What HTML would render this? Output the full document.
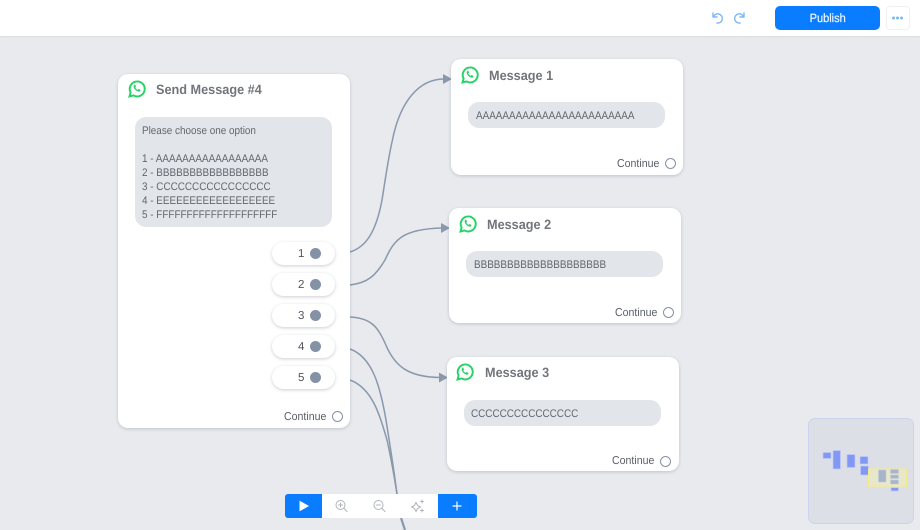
<!DOCTYPE html>
<html><head><meta charset="utf-8"><style>
html,body{margin:0;padding:0}
body{width:920px;height:530px;position:relative;overflow:hidden;background:#e8eaee;font-family:"Liberation Sans",sans-serif;color:#6b7280;text-rendering:geometricPrecision}
#w{position:absolute;left:0;top:0;width:920px;height:530px;overflow:hidden;filter:blur(.35px)}
.a{position:absolute}
.top{left:0;top:0;width:920px;height:36px;background:#fff;box-shadow:0 1px 2px rgba(0,0,0,.06)}
.pub{left:775px;top:6px;width:105px;height:24px;background:#0a7cff;border-radius:5px;color:#e8f3ff;line-height:24px;text-align:center}
.pub span{display:inline-block;font-size:12px;-webkit-text-stroke:.25px #e8f3ff;transform:scaleX(.92)}
.more{left:886px;top:6px;width:22px;height:22px;border:1px solid #eef0f3;border-radius:4px;background:#fff}
.card{background:#fff;border-radius:10px;box-shadow:0 1px 3px rgba(70,80,100,.25);width:232px}
.ttl{font-size:13.5px;font-weight:bold;color:#72757b;white-space:nowrap;transform:scaleX(.94);transform-origin:0 50%}
.bub{background:#e2e5ea;border-radius:11px;white-space:nowrap}
.t{position:absolute;font-size:11px;color:#62666e;transform:scaleX(.9);transform-origin:0 50%}
.cont{font-size:11.5px;color:#5a5f67;white-space:nowrap;transform:scaleX(.92);transform-origin:0 50%}
.ring{width:9px;height:9px;border:1.5px solid #8592a6;border-radius:50%;background:#fff}
.opt{left:272px;width:63px;height:23px;background:#fff;border-radius:12px;box-shadow:0 1px 3px rgba(70,80,100,.28)}
.opt span{position:absolute;left:26px;width:6px;top:4.500px;font-size:11.500px;line-height:15px;color:#50555d}
.opt i{position:absolute;left:38px;top:6px;width:11px;height:11px;border-radius:50%;background:#8492a6}
.tool{top:494px;height:24px}
.wa{width:18px;height:18px}
</style></head><body><div id="w">
<div class="a top"></div>
<svg class="a" style="left:710px;top:10px" width="40" height="16" fill="none" stroke="#7db7f5" stroke-width="1.4" stroke-linecap="round" stroke-linejoin="round"><path d="M3 3v4h4M3.400 7A4.600 4.600 0 1 1 7 13"/><path d="M34 3v4h-4M33.600 7A4.600 4.600 0 1 0 30 13"/></svg>
<div class="a pub"><span>Publish</span></div>
<div class="a more"></div>
<svg class="a" style="left:891px;top:15px" width="13" height="6" fill="#7db7f5"><circle cx="2.500" cy="3" r="1.500"/><circle cx="6.500" cy="3" r="1.500"/><circle cx="10.500" cy="3" r="1.500"/></svg>

<svg class="a" style="left:0;top:0;z-index:1" width="920" height="530" fill="none" stroke="#8a98ac" stroke-width="1.500">
<path d="M350 252C366 247 376 232 382 200C386 175 388 160 392 142C400 100 420 79 444 79"/>
<path d="M350 285C368 283 376 275 385 260C394 240 402 229 442 228"/>
<path d="M350 317C372 318 378 328 385 343C395 368 410 377 440 377.500"/>
<path d="M350 349C372 357 380 385 386 420C390 445 394 470 397 494"/>
<path d="M350 380C372 388 380 415 387 440C391 458 394 475 397 494"/>
<path d="M401 518L405 530" stroke-width="2.200"/>
<path d="M452 79l-9-5v10zM450 228l-9-5v10zM448 377.500l-9-5v10z" fill="#8a98ac" stroke="none"/>
</svg>

<div class="a card" style="left:118px;top:74px;height:354px;z-index:2"></div>
<svg class="a wa" style="left:128px;top:80px;z-index:3" viewBox="0 0 24 24" fill="none" stroke="#25d366" stroke-width="2.600"><path d="M2 22l1.500-5.300A10 10 0 1 1 7.300 20.600z"/><path d="M8.500 6.800c-1.500 1.200-1.200 3.400.8 5.700s4.800 3.800 6.400 2.600c1.100-.8 1.200-1.500.7-1.900l-2-1.100c-.6-.2-.9.800-1.500 1-1-.2-2.800-2-3.100-3.100.1-.6 1.100-.9.900-1.500l-1-2c-.4-.5-1.200-.5-1.500-.3z" fill="#25d366" stroke="none"/></svg>
<div class="a ttl" style="left:156px;top:82px;z-index:3">Send Message #4</div>
<div class="a bub" style="left:135px;top:117px;width:197px;height:110px;z-index:3"><div class="t" style="left:7px;top:6.500px;line-height:14px">Please choose one option<br><br>1 - AAAAAAAAAAAAAAAAA<br>2 - BBBBBBBBBBBBBBBBB<br>3 - CCCCCCCCCCCCCCCC<br>4 - EEEEEEEEEEEEEEEEEE<br>5 - FFFFFFFFFFFFFFFFFFFF</div></div>
<div class="a opt" style="top:242px;z-index:3"><span>1</span><i></i></div>
<div class="a opt" style="top:273px;z-index:3"><span>2</span><i></i></div>
<div class="a opt" style="top:304px;z-index:3"><span>3</span><i></i></div>
<div class="a opt" style="top:335px;z-index:3"><span>4</span><i></i></div>
<div class="a opt" style="top:366px;z-index:3"><span>5</span><i></i></div>
<div class="a cont" style="left:284px;top:410.500px;z-index:3">Continue</div>
<div class="a ring" style="left:331.500px;top:411px;z-index:3"></div>

<div class="a card" style="left:451px;top:59px;height:116px;z-index:2"></div>
<svg class="a wa" style="left:461px;top:66px;z-index:3" viewBox="0 0 24 24" fill="none" stroke="#25d366" stroke-width="2.600"><path d="M2 22l1.500-5.300A10 10 0 1 1 7.300 20.600z"/><path d="M8.500 6.800c-1.500 1.200-1.200 3.400.8 5.700s4.800 3.800 6.400 2.600c1.100-.8 1.200-1.500.7-1.900l-2-1.100c-.6-.2-.9.800-1.500 1-1-.2-2.800-2-3.100-3.100.1-.6 1.100-.9.900-1.500l-1-2c-.4-.5-1.200-.5-1.500-.3z" fill="#25d366" stroke="none"/></svg>
<div class="a ttl" style="left:489px;top:68px;z-index:3">Message 1</div>
<div class="a bub" style="left:468px;top:102px;width:197px;height:26px;z-index:3"><div class="t" style="left:8px;top:7px;line-height:14px">AAAAAAAAAAAAAAAAAAAAAAAA</div></div>
<div class="a cont" style="left:617px;top:157.500px;z-index:3">Continue</div>
<div class="a ring" style="left:664.500px;top:158px;z-index:3"></div>

<div class="a card" style="left:449px;top:208px;height:115px;z-index:2"></div>
<svg class="a wa" style="left:459px;top:215px;z-index:3" viewBox="0 0 24 24" fill="none" stroke="#25d366" stroke-width="2.600"><path d="M2 22l1.500-5.300A10 10 0 1 1 7.300 20.600z"/><path d="M8.500 6.800c-1.500 1.200-1.200 3.400.8 5.700s4.800 3.800 6.400 2.600c1.100-.8 1.200-1.500.7-1.900l-2-1.100c-.6-.2-.9.800-1.500 1-1-.2-2.800-2-3.100-3.100.1-.6 1.100-.9.900-1.500l-1-2c-.4-.5-1.200-.5-1.500-.3z" fill="#25d366" stroke="none"/></svg>
<div class="a ttl" style="left:487px;top:217px;z-index:3">Message 2</div>
<div class="a bub" style="left:466px;top:251px;width:197px;height:26px;z-index:3"><div class="t" style="left:8px;top:7px;line-height:14px">BBBBBBBBBBBBBBBBBBBB</div></div>
<div class="a cont" style="left:615px;top:306.500px;z-index:3">Continue</div>
<div class="a ring" style="left:662.500px;top:307px;z-index:3"></div>

<div class="a card" style="left:447px;top:357px;height:114px;z-index:2"></div>
<svg class="a wa" style="left:456px;top:363px;z-index:3" viewBox="0 0 24 24" fill="none" stroke="#25d366" stroke-width="2.600"><path d="M2 22l1.500-5.300A10 10 0 1 1 7.300 20.600z"/><path d="M8.500 6.800c-1.500 1.200-1.200 3.400.8 5.700s4.800 3.800 6.400 2.600c1.100-.8 1.200-1.500.7-1.900l-2-1.100c-.6-.2-.9.800-1.500 1-1-.2-2.800-2-3.100-3.100.1-.6 1.100-.9.900-1.500l-1-2c-.4-.5-1.200-.5-1.500-.3z" fill="#25d366" stroke="none"/></svg>
<div class="a ttl" style="left:485px;top:365px;z-index:3">Message 3</div>
<div class="a bub" style="left:464px;top:400px;width:197px;height:26px;z-index:3"><div class="t" style="left:7px;top:6.500px;line-height:14px">CCCCCCCCCCCCCCC</div></div>
<div class="a cont" style="left:612px;top:455px;z-index:3">Continue</div>
<div class="a ring" style="left:659.500px;top:455.500px;z-index:3"></div>

<div class="a tool" style="left:322px;width:116px;background:#fff;z-index:4"></div>
<div class="a tool" style="left:285px;width:37px;background:#0a7cff;border-radius:3px 0 0 3px;z-index:4"></div>
<div class="a tool" style="left:438px;width:39px;background:#0a7cff;border-radius:0 3px 3px 0;z-index:4"></div>
<svg class="a" style="left:285px;top:494px;z-index:5" width="192" height="24" fill="none" stroke="#b0b4ba" stroke-width="1" stroke-linecap="round">
<path d="M15 7.500v9l8-4.500z" fill="#fff" stroke="#fff"/>
<circle cx="55.500" cy="11" r="4.500"/><path d="M59 14.500l3 3M53.500 11h4M55.500 9v4"/>
<circle cx="93.500" cy="11" r="4.500"/><path d="M97 14.500l3 3M91.500 11h4"/>
<path d="M131 8.500l1.500 3 3 1.500-3 1.500-1.500 3-1.500-3-3-1.500 3-1.500zM137 6v3M135.500 7.500h3M137 15v3M135.500 16.500h3"/>
<path d="M172 8v8M168 12h8" stroke="#fff" stroke-width="1.200"/>
</svg>

<div class="a" style="left:808px;top:418px;width:104px;height:104px;background:#dce0e6;border:1.500px solid #cbd3ee;border-radius:7px;z-index:4"></div>
<svg class="a" style="left:800px;top:410px;z-index:5" width="120" height="120">
<g fill="#8397f5" stroke="#c2ccf5" stroke-width=".7">
<rect x="23" y="42.500" width="8" height="6"/><rect x="33" y="40.500" width="7.500" height="18.500"/><rect x="47" y="44.500" width="8" height="13"/><rect x="60" y="46.500" width="8" height="7.500"/><rect x="60.500" y="56" width="8" height="9"/><rect x="91" y="77.500" width="7.500" height="3.500"/>
</g>
<rect x="68.500" y="59" width="38" height="18" fill="#f5f0a8" fill-opacity=".45" stroke="#f3e98e" stroke-width="1"/>
<g fill="#a9b3cc" stroke="#c5cbdc" stroke-width=".5"><rect x="78.500" y="60" width="7.500" height="12"/><rect x="90.500" y="59.500" width="8" height="4"/><rect x="90.500" y="65" width="8" height="3.500"/><rect x="90.500" y="70" width="8" height="4"/></g>
</svg>
</div></body></html>
